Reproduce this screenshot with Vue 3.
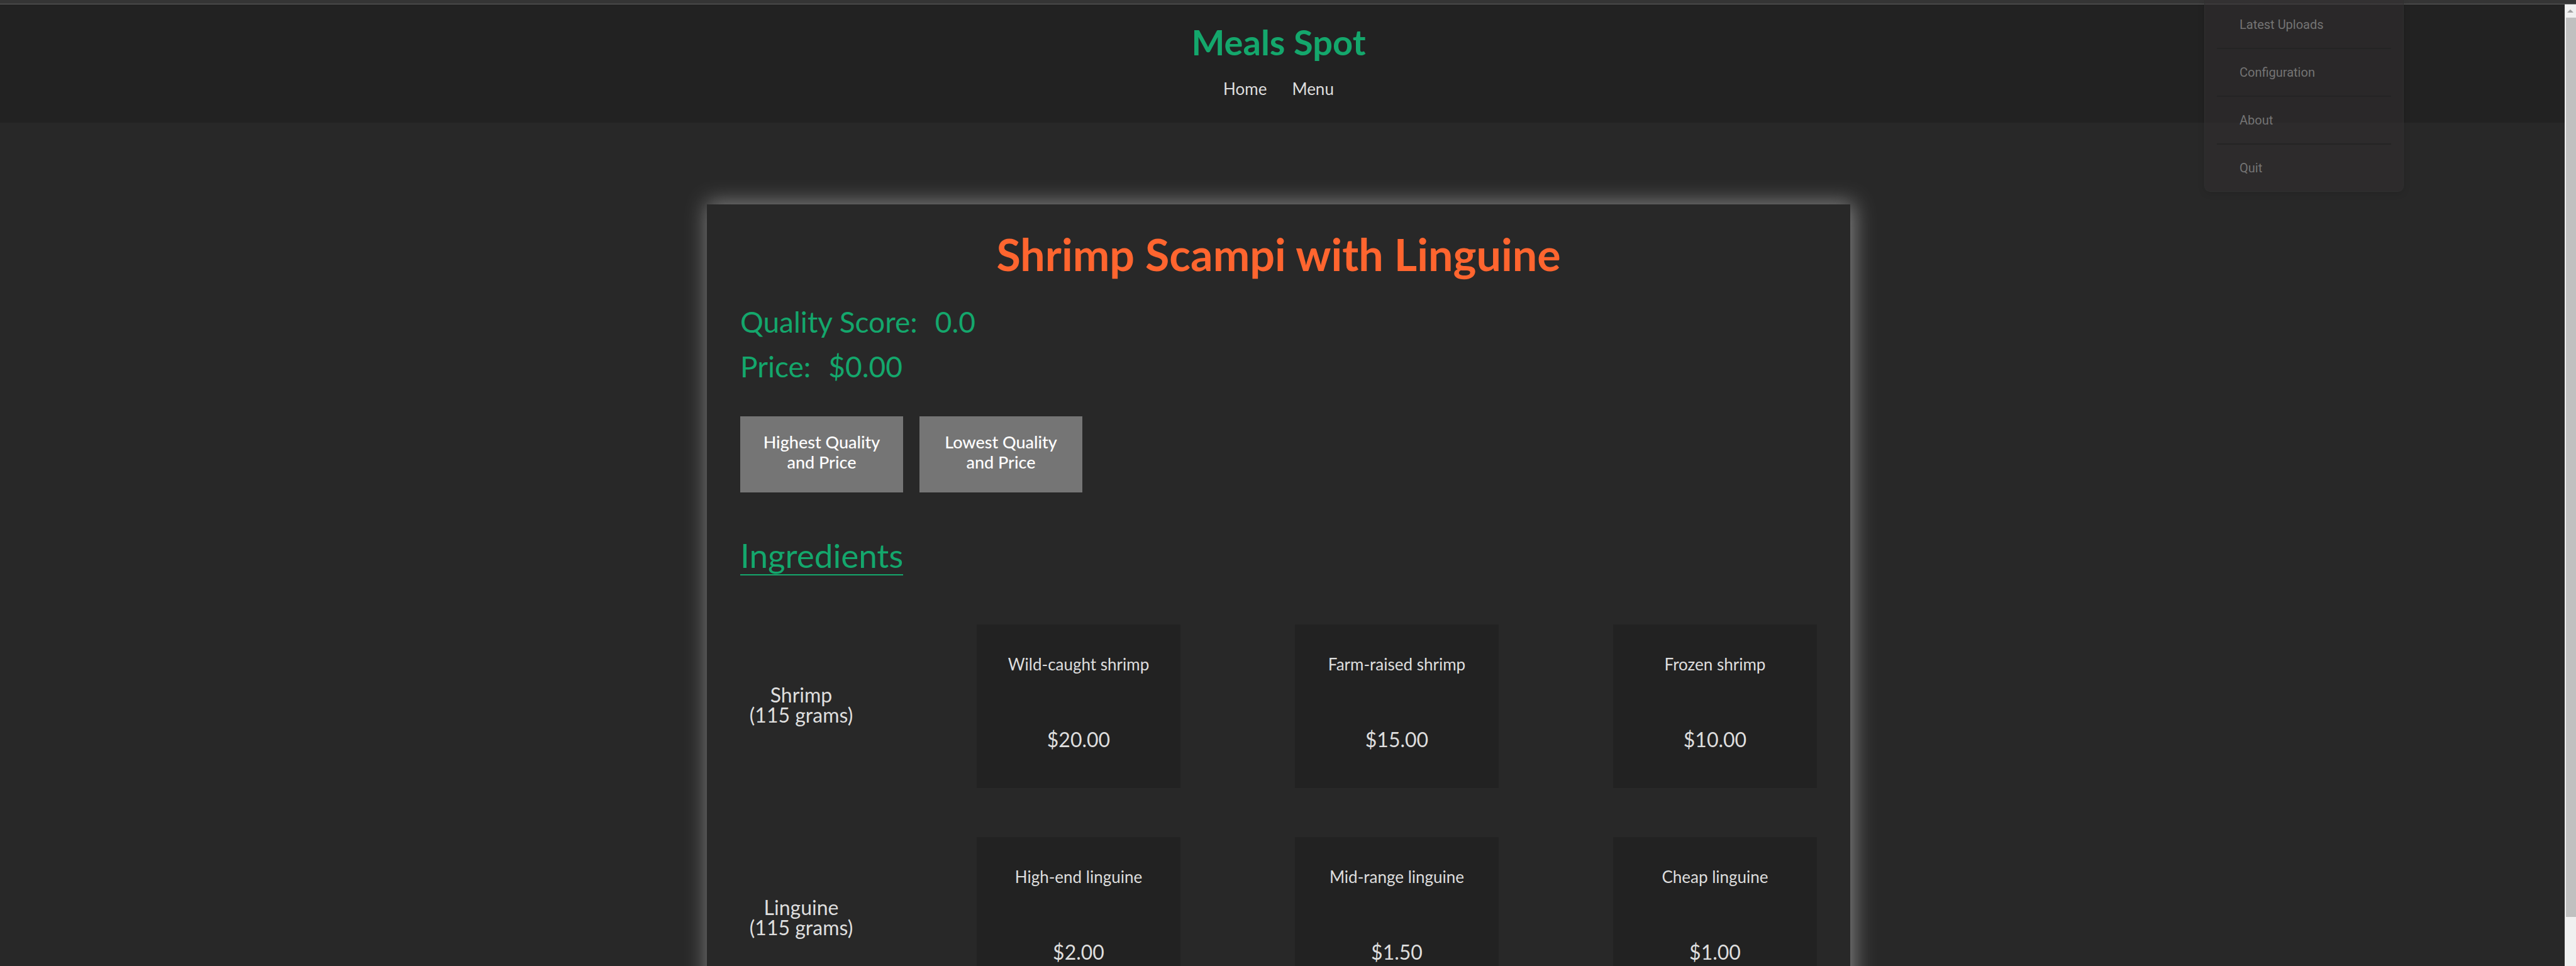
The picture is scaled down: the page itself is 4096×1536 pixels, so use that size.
<script setup>
const links = ['Home', 'Menu']
const trayItems = ['Latest Uploads', 'Configuration', 'About', 'Quit']
const ingredients = [
  {
    name: 'Shrimp',
    amount: '(115 grams)',
    options: [
      { name: 'Wild-caught shrimp', price: '$20.00' },
      { name: 'Farm-raised shrimp', price: '$15.00' },
      { name: 'Frozen shrimp', price: '$10.00' }
    ]
  },
  {
    name: 'Linguine',
    amount: '(115 grams)',
    options: [
      { name: 'High-end linguine', price: '$2.00' },
      { name: 'Mid-range linguine', price: '$1.50' },
      { name: 'Cheap linguine', price: '$1.00' }
    ]
  }
]
</script>

<template>
  <div class="window">
    <div class="chrome"></div>
    <div class="viewport">
      <div class="page">
        <header class="site-header">
          <a class="brand" href="#">Meals Spot</a>
          <nav class="nav">
            <a v-for="link in links" :key="link" href="#">{{ link }}</a>
          </nav>
        </header>

        <main class="content">
          <article class="meal">
            <h1>Shrimp Scampi with Linguine</h1>
            <dl class="totals">
              <div><dt>Quality Score:</dt><dd>0.0</dd></div>
              <div><dt>Price:</dt><dd>$0.00</dd></div>
            </dl>
            <div class="presets">
              <button type="button">Highest Quality and Price</button>
              <button type="button">Lowest Quality and Price</button>
            </div>
            <h2>Ingredients</h2>
            <section v-for="item in ingredients" :key="item.name" class="ingredient">
              <h3>{{ item.name }}<br />{{ item.amount }}</h3>
              <button v-for="option in item.options" :key="option.name" type="button" class="option">
                <span class="option-name">{{ option.name }}</span>
                <span class="option-price">{{ option.price }}</span>
              </button>
            </section>
          </article>
        </main>
      </div>

      <div class="scrollbar">
        <div class="scroll-up">
          <svg width="10" height="5" viewBox="0 0 10 5"><path d="M5 0 10 5H0z" fill="#a0a0a0" /></svg>
        </div>
        <div class="thumb"></div>
      </div>
    </div>

    <ul class="tray">
      <li v-for="item in trayItems" :key="item"><a href="#">{{ item }}</a></li>
    </ul>
  </div>
</template>

<style>
html,
body {
  background: #282828;
  overflow: hidden;
}
</style>

<style scoped>
.window {
  position: relative;
  display: flex;
  flex-direction: column;
  height: 100vh;
  overflow: hidden;
  background: #282828;
  color: #dedede;
  font-family: Lato, 'Open Sans', sans-serif;
}

a {
  color: inherit;
  text-decoration: none;
}

.chrome {
  flex: none;
  height: 6px;
  background: #353535;
  border-bottom: 1px solid #606060;
}

.viewport {
  flex: 1;
  min-height: 0;
  display: flex;
}

.page {
  flex: 1;
  min-width: 0;
  overflow: hidden;
}

.site-header {
  display: flex;
  flex-direction: column;
  align-items: center;
  gap: 24px;
  height: 188px;
  box-sizing: border-box;
  padding: 28px 12px 0 0;
  background: #222222;
}

.brand {
  color: #14a76c;
  font-size: 56px;
  font-weight: 700;
  line-height: 64px;
}

.nav {
  display: flex;
  gap: 40px;
  font-size: 26px;
  line-height: 36px;
}

.content {
  display: flex;
  justify-content: center;
  padding: 130px 12px 0 0;
}

.meal {
  width: 1818px;
  min-height: 1400px;
  box-sizing: border-box;
  padding: 37px 53px;
  background: #282828;
  box-shadow: 3px 0 32px 3px #828282;
}

h1 {
  margin: 0;
  color: #ff652f;
  font-size: 70px;
  font-weight: 700;
  line-height: 84px;
  text-align: center;
}

.totals {
  margin: 30px 0 0;
  color: #14a76c;
  font-size: 46px;
  line-height: 71px;
}

.totals div {
  display: flex;
  gap: 28px;
}

.totals dd {
  margin: 0;
}

.presets {
  display: flex;
  gap: 26px;
  margin-top: 44px;
}

.presets button {
  width: 259px;
  height: 121px;
  padding: 0 32px 8px;
  border: 0;
  background: #757575;
  color: #ffffff;
  font: 500 27px/32px Lato, 'Open Sans', sans-serif;
}

h2 {
  width: max-content;
  margin: 70px 0 78px;
  border-bottom: 2px solid #14a76c;
  color: #14a76c;
  font-size: 53px;
  font-weight: 400;
  line-height: 60px;
}

.ingredient {
  display: flex;
  justify-content: space-between;
  align-items: center;
  margin-bottom: 78px;
}

h3 {
  width: 194px;
  margin: 0;
  padding-bottom: 5px;
  font-size: 32px;
  font-weight: 400;
  line-height: 32px;
  text-align: center;
}

.option {
  display: flex;
  flex-direction: column;
  align-items: center;
  gap: 82px;
  width: 324px;
  height: 260px;
  padding: 45px 0 0;
  border: 0;
  background: #222222;
  color: #dedede;
  font-family: inherit;
}

.option-name {
  font-size: 26px;
  line-height: 36px;
}

.option-price {
  font-size: 32px;
  line-height: 40px;
}

.scrollbar {
  flex: none;
  display: flex;
  flex-direction: column;
  width: 18px;
  background: #f0f0f0;
}

.scroll-up {
  display: flex;
  justify-content: center;
  align-items: center;
  height: 21px;
}

.thumb {
  height: 1430px;
  margin-left: 2px;
  background: #c0c0c0;
}

.tray {
  position: absolute;
  top: 0;
  right: 274px;
  width: 317px;
  box-sizing: border-box;
  margin: 0;
  padding: 2px 19px 0;
  border: 1px solid #303030;
  border-top: 0;
  border-radius: 0 0 9px 9px;
  background: rgba(50, 46, 48, 0.5);
  box-shadow: 0 3px 12px rgba(0, 0, 0, 0.1);
  color: #747474;
  font: 20px/74px Roboto, sans-serif;
  list-style: none;
}

.tray li {
  padding-left: 36px;
  border-bottom: 2px solid #242424;
}

.tray li:last-child {
  border-bottom: 0;
}
</style>
